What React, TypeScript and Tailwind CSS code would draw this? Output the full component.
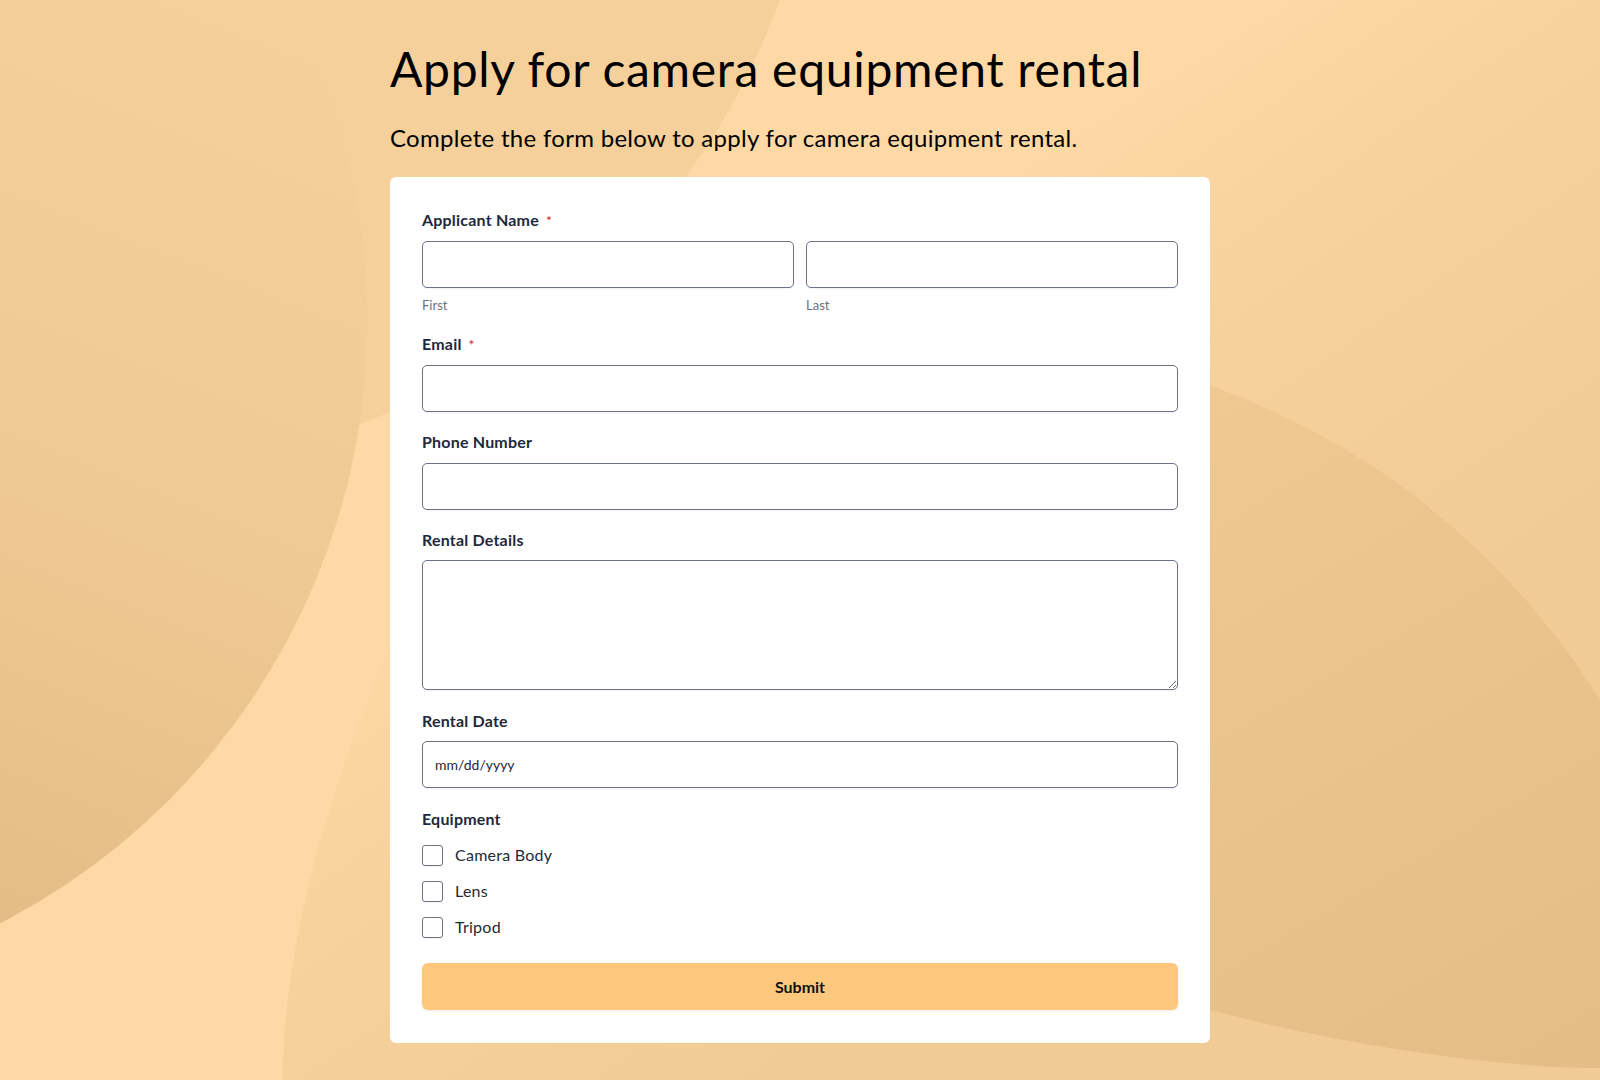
import React from "react";

function Background() {
  return (
    <svg
      className="absolute inset-0 h-full w-full"
      viewBox="0 0 1600 1080"
      preserveAspectRatio="xMidYMid slice"
      aria-hidden="true"
    >
      <defs>
        <linearGradient id="gE" gradientUnits="userSpaceOnUse" x1="1250" y1="0" x2="1600" y2="500">
          <stop offset="0" stopColor="#fed9a5" />
          <stop offset="0.35" stopColor="#f7d29d" />
          <stop offset="1" stopColor="#f1cb95" />
        </linearGradient>
        <linearGradient id="gB" gradientUnits="userSpaceOnUse" x1="400" y1="0" x2="0" y2="1000">
          <stop offset="0" stopColor="#f6d19c" />
          <stop offset="0.5" stopColor="#f0ca94" />
          <stop offset="1" stopColor="#e2ba83" />
        </linearGradient>
        <linearGradient id="gD" gradientUnits="userSpaceOnUse" x1="1200" y1="380" x2="1600" y2="1070">
          <stop offset="0" stopColor="#efc892" />
          <stop offset="1" stopColor="#e4bc85" />
        </linearGradient>
      </defs>
      <rect width="1600" height="1080" fill="#fed9a5" />
      <path d="M450 520 C330 750 283 950 283 1080 L1600 1080 L1600 0 L1300 0 Z" fill="url(#gE)" />
      <path
        d="M1100 355 C1300 395 1480 510 1600 700 L1600 1067 C1500 1068 1330 1042 1210 1009 L1100 975 Z"
        fill="url(#gD)"
      />
      <circle cx="113" cy="-241" r="709" fill="#f5d09b" />
      <circle cx="-310" cy="320" r="678" fill="url(#gB)" />
    </svg>
  );
}

function Label({ children, required }: { children: React.ReactNode; required?: boolean }) {
  return (
    <div className="flex h-5 items-center text-[16px] leading-5 font-bold tracking-[0.2px] text-[#1e293b]">
      <span>{children}</span>
      {required && (
        <span className="ml-[7px] mt-[2px] text-[14px] leading-none font-normal text-[#dc2626]">*</span>
      )}
    </div>
  );
}

const inputCls =
  "block h-[47px] w-full rounded-[5px] border border-[#6b7280] bg-white px-3 text-[14px] text-[#1f2937] shadow-[0_1px_2px_rgba(0,0,0,0.06)] outline-none";

function Check({ label }: { label: string }) {
  return (
    <label className="flex h-6 items-center gap-3">
      <input
        type="checkbox"
        className="h-[21px] w-[21px] shrink-0 appearance-none rounded-[3px] border border-[#6b7280] bg-white shadow-[0_1px_2px_rgba(0,0,0,0.06)]"
      />
      <span className="text-[16px] leading-6 tracking-[0.25px] text-[#1f2937]">{label}</span>
    </label>
  );
}

export default function App() {
  return (
    <div className="relative min-h-screen w-full overflow-hidden bg-[#fed9a5] [font-family:Lato,'Noto_Sans',sans-serif]">
      <Background />
      <div className="relative mx-auto w-[820px] pt-[40px] pb-[38px]">
        <h1 className="text-[48px] leading-[58px] font-normal tracking-[0.7px] text-black">
          Apply for camera equipment rental
        </h1>
        <p className="mt-[25px] text-[24px] leading-[29px] tracking-[0.3px] text-black">
          Complete the form below to apply for camera equipment rental.
        </p>
        <form className="mt-[25px] rounded-md bg-white px-8 pt-[33px] pb-[33px]">
          <Label required>Applicant Name</Label>
          <div className="mt-[11px] grid grid-cols-2 gap-3">
            <div>
              <input type="text" className={inputCls} />
              <div className="mt-[9px] text-[13px] leading-4 text-[#6b7280]">First</div>
            </div>
            <div>
              <input type="text" className={inputCls} />
              <div className="mt-[9px] text-[13px] leading-4 text-[#6b7280]">Last</div>
            </div>
          </div>

          <div className="mt-[21px]">
            <Label required>Email</Label>
            <input type="email" className={`mt-[11px] ${inputCls}`} />
          </div>

          <div className="mt-[20px]">
            <Label>Phone Number</Label>
            <input type="tel" className={`mt-[11px] ${inputCls}`} />
          </div>

          <div className="mt-[20px]">
            <Label>Rental Details</Label>
            <textarea className="mt-[10px] block h-[130px] w-full rounded-[5px] border border-[#6b7280] bg-white px-3 py-2 text-[14px] text-[#1f2937] shadow-[0_1px_2px_rgba(0,0,0,0.06)] outline-none" />
          </div>

          <div className="mt-[21px]">
            <Label>Rental Date</Label>
            <input
              type="text"
              placeholder="mm/dd/yyyy"
              className={`mt-[10px] ${inputCls} placeholder:text-[#1f2937]`}
            />
          </div>

          <div className="mt-[21px]">
            <Label>Equipment</Label>
            <div className="mt-[14px] flex flex-col gap-3">
              <Check label="Camera Body" />
              <Check label="Lens" />
              <Check label="Tripod" />
            </div>
          </div>

          <button
            type="button"
            className="mt-[24px] block h-[47px] w-full rounded-[6px] bg-[#fec87c] text-[16px] font-bold text-[#111111] shadow-[0_1px_3px_rgba(0,0,0,0.08)]"
          >
            Submit
          </button>
        </form>
      </div>
    </div>
  );
}
